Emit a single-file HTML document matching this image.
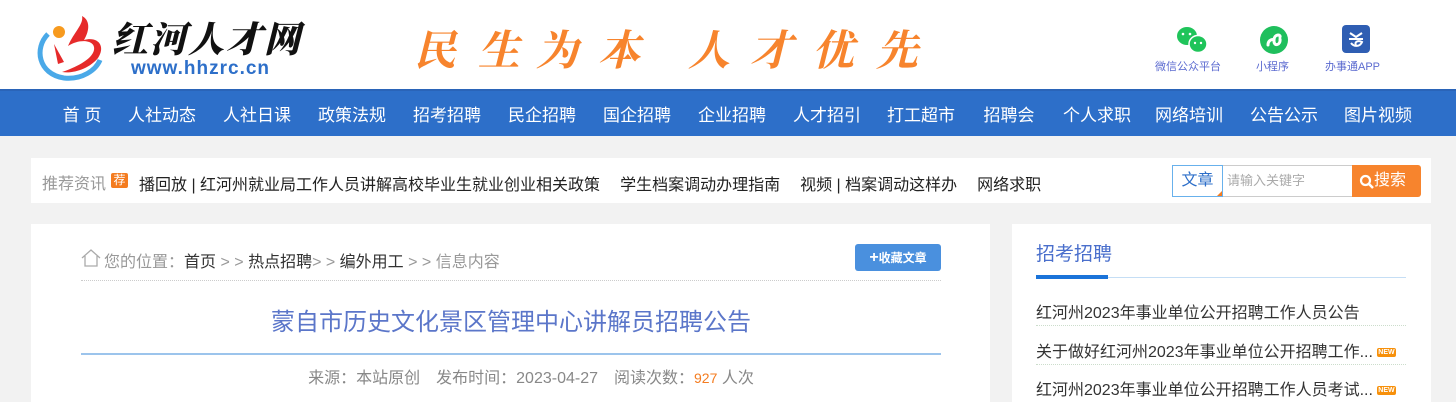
<!DOCTYPE html>
<html><head><meta charset="utf-8"><style>
*{margin:0;padding:0;box-sizing:border-box}
body{width:1456px;height:402px;overflow:hidden;background:#f2f2f2;font-family:"Liberation Sans","Noto Sans CJK SC",sans-serif;position:relative}
.abs{position:absolute}
.hdr{position:absolute;left:0;top:0;width:1456px;height:89px;background:#fff}
.nav{position:absolute;left:0;top:89px;width:1456px;height:47px;background:#2d6fc9;border-top:2px solid #2a64b8}
.nav span{position:absolute;top:10px;color:#fff;font-size:17px;white-space:nowrap;transform:translateX(-50%)}
.slo{position:absolute;top:18px;font-family:"Noto Serif CJK SC",serif;font-weight:bold;font-size:42px;color:#f7842d;font-style:italic}
.ico{position:absolute;font-size:11px;color:#5c6bd0;text-align:center;white-space:nowrap}
.box{position:absolute;background:#fff}
.new{display:inline-block;vertical-align:middle;margin-left:4px;width:19px;height:9px;background:#f7900a;color:#fff;font-size:7px;line-height:9px;text-align:center;font-weight:bold;border-radius:2px}
.g{display:inline-block;width:20px}
</style></head><body>
<div class="hdr">
 <svg class="abs" style="left:34px;top:12px" width="80" height="72" viewBox="0 0 80 72">
  <path d="M14 22 C0 36 4 62 30 66 C48 68 62 58 66 48" stroke="#4aa9e8" stroke-width="5" fill="none"/>
  <path d="M28 60 C40 56 58 48 60 38 C62 28 46 26 34 34 C40 20 50 12 48 4 C56 8 56 18 50 28 C64 24 72 34 64 46 C56 56 40 62 28 60Z" fill="#e62a2a"/>
  <path d="M20 32 L30 50 L24 52 Z" fill="#e62a2a"/>
  <circle cx="25" cy="20" r="6" fill="#f79a1e"/>
 </svg>
 <div class="abs" style="left:112px;top:12px;font-family:'Noto Serif CJK SC',serif;font-weight:900;font-size:36px;letter-spacing:2px;color:#111;font-style:italic">红河人才网</div>
 <div class="abs" style="left:131px;top:58px;font-size:19px;font-weight:bold;color:#2d6fc9;letter-spacing:1px">www.hhzrc.cn</div>
 <div class="slo" style="left:414px">民</div>
 <div class="slo" style="left:478px">生</div>
 <div class="slo" style="left:536px">为</div>
 <div class="slo" style="left:598px">本</div>
 <div class="slo" style="left:688px">人</div>
 <div class="slo" style="left:750px">才</div>
 <div class="slo" style="left:812px">优</div>
 <div class="slo" style="left:876px">先</div>
 <svg class="abs" style="left:1176px;top:26px" width="32" height="28" viewBox="0 0 32 28"><ellipse cx="11" cy="10" rx="10" ry="9" fill="#1fc45a"/><ellipse cx="22" cy="18" rx="9" ry="8.5" fill="#1fc45a" stroke="#fff" stroke-width="1.5"/><circle cx="7" cy="8" r="1.3" fill="#fff"/><circle cx="14" cy="8" r="1.3" fill="#fff"/><circle cx="19" cy="17" r="1.2" fill="#fff"/><circle cx="25" cy="17" r="1.2" fill="#fff"/></svg>
 <div class="ico" style="left:1155px;top:58px">微信公众平台</div>
 <svg class="abs" style="left:1259px;top:25px" width="30" height="30" viewBox="0 0 30 30"><circle cx="15" cy="15" r="14" fill="#1fbf5d"/><path d="M9 20 C9 14 15 14 15 15 L15 16 C15 22 22 20 21 14 M15 15 C15 9 22 9 21 12" stroke="#fff" stroke-width="3" fill="none" stroke-linecap="round"/></svg>
 <div class="ico" style="left:1256px;top:58px">小程序</div>
 <svg class="abs" style="left:1342px;top:25px" width="28" height="28" viewBox="0 0 28 28"><rect width="28" height="28" rx="4" fill="#2f5eb3"/><path d="M8 8 L14 12 L20 8 M7 14 H21 M9 18 C12 22 18 22 20 17 C16 15 12 17 14 20" stroke="#fff" stroke-width="2" fill="none"/></svg>
 <div class="ico" style="left:1325px;top:58px">办事通APP</div>
</div>
<div class="nav">
 <span style="left:82px">首 页</span><span style="left:162px">人社动态</span><span style="left:257px">人社日课</span><span style="left:352px">政策法规</span><span style="left:447px">招考招聘</span><span style="left:542px">民企招聘</span><span style="left:637px">国企招聘</span><span style="left:732px">企业招聘</span><span style="left:827px">人才招引</span><span style="left:921px">打工超市</span><span style="left:1009px">招聘会</span><span style="left:1097px">个人求职</span><span style="left:1189px">网络培训</span><span style="left:1284px">公告公示</span><span style="left:1378px">图片视频</span>
</div>
<div class="box" style="left:31px;top:158px;width:1400px;height:45px">
 <div class="abs" style="left:11px;top:12px;font-size:16px;color:#999">推荐资讯</div>
 <div class="abs" style="left:80px;top:15px;width:17px;height:15px;background:#f47c20;color:#fff;font-size:12px;line-height:15px;text-align:center;border-radius:2px">荐</div>
 <div class="abs" style="left:108px;top:13px;width:902px;overflow:hidden;white-space:nowrap;font-size:16px;color:#222">播回放 | 红河州就业局工作人员讲解高校毕业生就业创业相关政策<span class="g"></span>学生档案调动办理指南<span class="g"></span>视频 | 档案调动这样办<span class="g"></span>网络求职</div>
 <div class="abs" style="left:1141px;top:7px;width:51px;height:32px;border:1px solid #68b1ec;font-size:16px;color:#2d6fc9;line-height:30px;text-align:center">文章</div>
 <div class="abs" style="left:1186px;top:33px;width:0;height:0;border-left:5px solid transparent;border-bottom:5px solid #f47c20"></div>
 <div class="abs" style="left:1192px;top:7px;width:130px;height:32px;border:1px solid #ccc;border-left:none;font-size:13px;color:#aaa;line-height:30px;padding-left:4px">请输入关键字</div>
 <div class="abs" style="left:1321px;top:7px;width:69px;height:32px;background:#f7842d;border-radius:0 3px 3px 0;color:#fff;font-size:16px;line-height:32px;padding-left:22px">搜索</div>
 <svg class="abs" style="left:1328px;top:16px" width="16" height="16" viewBox="0 0 16 16"><circle cx="6.5" cy="6.5" r="4.5" stroke="#fff" stroke-width="2.2" fill="none"/><path d="M10 10 L14 14" stroke="#fff" stroke-width="2.5"/></svg>
</div>
<div class="box" style="left:31px;top:224px;width:959px;height:178px">
 <svg class="abs" style="left:49px;top:24px" width="22" height="20" viewBox="0 0 22 20"><path d="M2 10 L11 2 L20 10 M5 8 V18 H17 V8" stroke="#aaa" stroke-width="1.3" fill="none"/></svg>
 <div class="abs" style="left:73px;top:24px;font-size:16px;color:#999;white-space:nowrap">您的位置：<span style="color:#333">首页</span> &gt; &gt; <span style="color:#333">热点招聘</span>&gt; &gt; <span style="color:#333">编外用工</span> &gt; &gt; 信息内容</div>
 <div class="abs" style="left:824px;top:20px;width:86px;height:27px;background:#4a90de;border-radius:3px;color:#fff;font-size:12px;font-weight:bold;line-height:27px;text-align:center"><span style="font-size:16px">+</span>收藏文章</div>
 <div class="abs" style="left:50px;top:56px;width:860px;border-top:1px dotted #ccc"></div>
 <div class="abs" style="left:50px;top:78px;width:860px;text-align:center;font-size:24px;color:#5b76c9">蒙自市历史文化景区管理中心讲解员招聘公告</div>
 <div class="abs" style="left:50px;top:129px;width:860px;border-top:2px solid #9cc4ec"></div>
 <div class="abs" style="left:70px;top:140px;width:860px;text-align:center;font-size:16px;color:#888">来源：本站原创　发布时间：2023-04-27　阅读次数：<span style="color:#f47c20;font-size:14px">927</span> 人次</div>
</div>
<div class="box" style="left:1012px;top:224px;width:419px;height:178px">
 <div class="abs" style="left:24px;top:15px;font-size:19px;color:#4a6fcc">招考招聘</div>
 <div class="abs" style="left:24px;top:53px;width:370px;border-top:1px solid #c5def5"></div>
 <div class="abs" style="left:24px;top:51px;width:72px;height:4px;background:#1a73d9"></div>
 <div class="abs" style="left:24px;top:75px;font-size:16px;color:#333;white-space:nowrap">红河州2023年事业单位公开招聘工作人员公告</div>
 <div class="abs" style="left:24px;top:101px;width:370px;border-top:1px dotted #ccddcc"></div>
 <div class="abs" style="left:24px;top:114px;font-size:16px;color:#333;white-space:nowrap">关于做好红河州2023年事业单位公开招聘工作...<span class="new">NEW</span></div>
 <div class="abs" style="left:24px;top:140px;width:370px;border-top:1px dotted #ccddcc"></div>
 <div class="abs" style="left:24px;top:152px;font-size:16px;color:#333;white-space:nowrap">红河州2023年事业单位公开招聘工作人员考试...<span class="new">NEW</span></div>
</div>
</body></html>
